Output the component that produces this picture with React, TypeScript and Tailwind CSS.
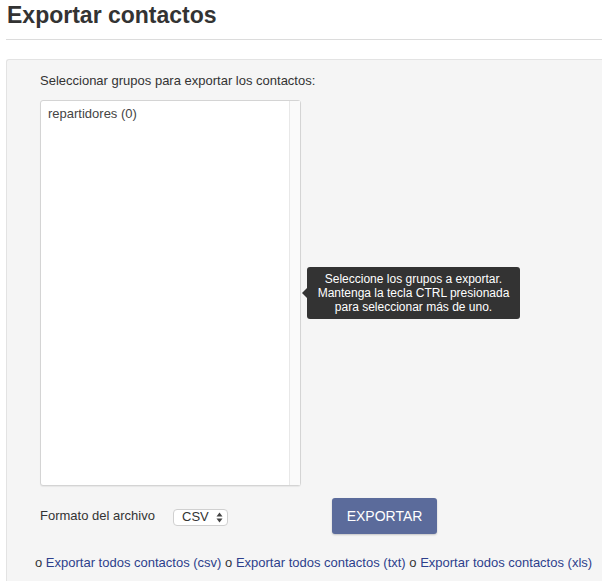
export default function App() {
  return (
    <div className="min-h-[581px] bg-white font-['Liberation_Sans',Arial,sans-serif] text-[#333]">
      <div className="pl-[6px]">
        <h1 className="pt-[1px] pl-[1px] text-[23px] leading-[28px] font-bold text-[#333]">Exportar contactos</h1>
        <div className="mt-[10px] h-px bg-[#dcdcdc]" />
        <div className="mt-[19px] h-[525px] rounded-tl-[3px] border-t border-l border-[#e3e3e3] bg-[#f5f5f5] pl-[33px]">
          <p className="pt-[12px] text-[13px] leading-[18px]">Seleccionar grupos para exportar los contactos:</p>
          <div className="mt-[10px] flex items-center">
            <div className="flex h-[386px] w-[261px] rounded-[3px] border border-[#d4d4d4] bg-white shadow-[0_1px_1px_rgba(0,0,0,0.06)]">
              <div className="flex-1 pt-[5px] pl-[7px] text-[13px] leading-[16px] text-[#444]">repartidores (0)</div>
              <div className="w-[11px] border-l border-[#e8e8e8] bg-[#fafafa]" />
            </div>
            <div className="relative ml-[6px] w-[213px] rounded-[3px] bg-[#333] px-[8px] py-[5px] text-center text-[12px] leading-[14px] text-white">
              <span className="absolute top-1/2 -left-[5px] -mt-[5px] h-0 w-0 border-y-[5px] border-r-[5px] border-y-transparent border-r-[#333]" />
              Seleccione los grupos a exportar. Mantenga la tecla CTRL presionada para seleccionar más de uno.
            </div>
          </div>
          <div className="mt-[12px] flex items-center">
            <span className="w-[133px] text-[13px] leading-[18px]">Formato del archivo</span>
            <div className="mt-[2px] flex h-[17px] w-[55px] items-center justify-between rounded-[4px] border border-[#d0d0d0] bg-white pr-[4px] pl-[8px] text-[13px] text-[#333]">
              <span>CSV</span>
              <svg width="7" height="11" viewBox="0 0 7 11">
                <path d="M3.5 0.5 L6.5 4.5 H0.5 Z" fill="#444" />
                <path d="M3.5 10.5 L6.5 6.5 H0.5 Z" fill="#444" />
              </svg>
            </div>
            <button className="ml-[104px] h-[36px] w-[105px] rounded-[3px] bg-[#5b6b9b] text-[14px] text-white shadow-[0_1px_2px_rgba(0,0,0,0.2)]">
              EXPORTAR
            </button>
          </div>
          <p className="-ml-[5px] mt-[20px] text-[13px] leading-[18px] text-[#333]">
            o <a className="text-[#2d3f8c]">Exportar todos contactos (csv)</a> o{' '}
            <a className="text-[#2d3f8c]">Exportar todos contactos (txt)</a> o{' '}
            <a className="text-[#2d3f8c]">Exportar todos contactos (xls)</a>
          </p>
        </div>
      </div>
    </div>
  );
}
